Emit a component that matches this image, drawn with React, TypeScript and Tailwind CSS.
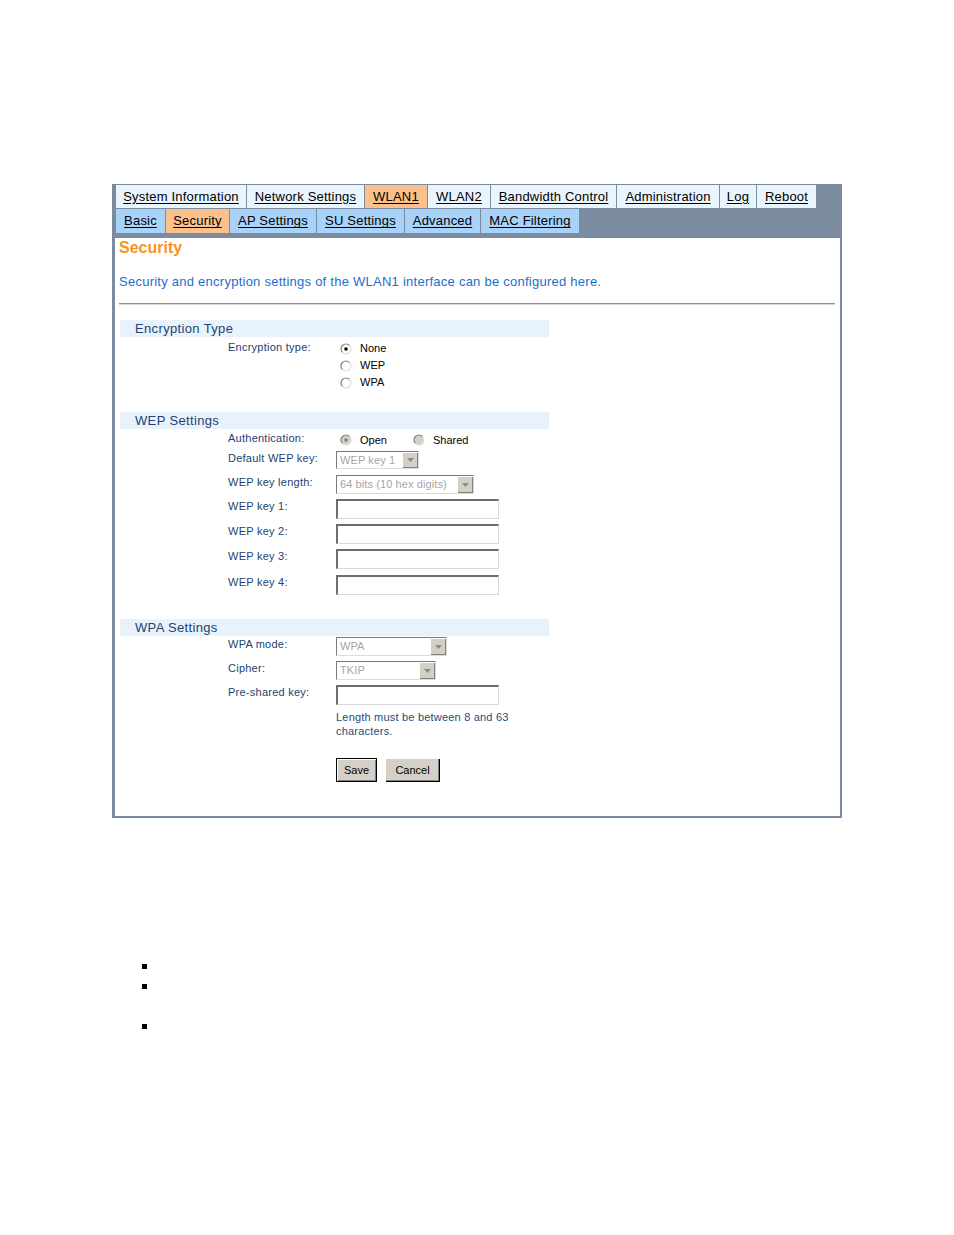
import React from "react"

// WLAN1 security page of the access point web UI

const topTabs = [
  { label: "System Information", w: "w-[130px]", active: false },
  { label: "Network Settings", w: "w-[117px]", active: false },
  { label: "WLAN1", w: "w-[62px]", active: true },
  { label: "WLAN2", w: "w-[62px]", active: false },
  { label: "Bandwidth Control", w: "w-[125px]", active: false },
  { label: "Administration", w: "w-[102px]", active: false },
  { label: "Log", w: "w-[36px]", active: false },
  { label: "Reboot", w: "w-[59px]", active: false },
]

const subTabs = [
  { label: "Basic", w: "w-[49px]", active: false },
  { label: "Security", w: "w-[63px]", active: true },
  { label: "AP Settings", w: "w-[86px]", active: false },
  { label: "SU Settings", w: "w-[87px]", active: false },
  { label: "Advanced", w: "w-[75px]", active: false },
  { label: "MAC Filtering", w: "w-[98px]", active: false },
]

function Radio({ checked = false, disabled = false }: { checked?: boolean; disabled?: boolean }) {
  return (
    <svg width="12" height="12" viewBox="0 0 12 12" className="shrink-0">
      <circle cx="6" cy="6" r="5" fill={disabled ? "#d4d0c8" : "#ffffff"} />
      <path d="M2.46 9.54 A5 5 0 0 1 9.54 2.46" fill="none" stroke="#808080" strokeWidth="1.2" />
      <path d="M9.54 2.46 A5 5 0 0 1 2.46 9.54" fill="none" stroke="#e2e0da" strokeWidth="1.2" />
      {checked && <circle cx="6" cy="6" r="1.8" fill={disabled ? "#808080" : "#000000"} />}
    </svg>
  )
}

function Select({ w, h, text }: { w: string; h: string; text: string }) {
  return (
    <div className={`${w} ${h} flex border-t border-l border-t-[#7a7a7a] border-l-[#7a7a7a] border-r border-b border-r-[#dcdcdc] border-b-[#dcdcdc] bg-white`}>
      <div className="flex-1 pl-[3px] text-[11px] leading-[17px] text-[#a6a6a6] tracking-[0.1px] whitespace-nowrap overflow-hidden">{text}</div>
      <div className="w-[16px] h-full flex items-center justify-center bg-[#d4d0c8] shadow-[inset_1px_1px_#ffffff,inset_-1px_-1px_#808080]">
        <svg width="7" height="4" viewBox="0 0 7 4">
          <path d="M0 0 L7 0 L3.5 4 Z" fill="#8a8a8a" />
        </svg>
      </div>
    </div>
  )
}

function TextInput() {
  return (
    <div className="w-[163px] h-[20px] bg-white border-t-2 border-l-2 border-t-[#6e6e6e] border-l-[#6e6e6e] border-r border-b border-r-[#d9d9d9] border-b-[#d9d9d9]" />
  )
}

function Label({ children, pt = "" }: { children: React.ReactNode; pt?: string }) {
  return (
    <div className={`w-[108px] shrink-0 text-[11px] leading-[14px] tracking-[0.25px] text-[#1d4272] ${pt}`}>
      {children}
    </div>
  )
}

function SectionBar({ title, mt }: { title: string; mt: string }) {
  return (
    <div className={`${mt} ml-px w-[429px] h-[17px] bg-[#e8f2fc] pl-[15px] text-[13px] leading-[17px] tracking-[0.35px] text-[#1e4370]`}>
      {title}
    </div>
  )
}

export default function App() {
  return (
    <div className="min-h-[1235px] bg-white font-['Liberation_Sans',Arial,sans-serif] pt-[184px]">
      <div className="ml-[112px] w-[730px] bg-[#7b8ca1] pt-px pl-[3px] pr-[2px] pb-[2px]">
        <div className="flex gap-px pl-px h-[23px]">
          {topTabs.map((t) => (
            <div
              key={t.label}
              className={`${t.w} flex items-center justify-center text-[13px] tracking-[0.2px] text-black underline underline-offset-2 whitespace-nowrap ${t.active ? "bg-[#fcc18a]" : "bg-[#eaf4fc]"}`}
            >
              {t.label}
            </div>
          ))}
        </div>
        <div className="flex gap-px pl-px mt-px h-[24px]">
          {subTabs.map((t) => (
            <div
              key={t.label}
              className={`${t.w} flex items-center justify-center text-[13px] tracking-[0.2px] text-black underline underline-offset-2 whitespace-nowrap ${t.active ? "bg-[#fcc18a]" : "bg-[#a8d2f8]"}`}
            >
              {t.label}
            </div>
          ))}
        </div>

        <div className="bg-white pl-[4px] pr-[5px] pb-[34px]">
          <h2 className="mt-[5px] h-[20px] leading-[20px] text-[16px] font-bold text-[#f7941d]">Security</h2>
          <p className="mt-[15px] leading-[17px] text-[13px] tracking-[0.25px] text-[#1e6dcc]">
            Security and encryption settings of the WLAN1 interface can be configured here.
          </p>
          <div className="mt-[13px] border-t border-b border-t-[#8f8f8f] border-b-[#d6d6d6]" />

          <SectionBar title="Encryption Type" mt="mt-[15px]" />
          <div className="ml-px pl-[108px] mt-[3px] flex">
            <Label>Encryption type:</Label>
            <div className="flex flex-col">
              {["None", "WEP", "WPA"].map((o, i) => (
                <div key={o} className="h-[17px] flex items-center gap-[8px] pl-[4px] text-[11px] text-black">
                  <Radio checked={i === 0} />
                  <span>{o}</span>
                </div>
              ))}
            </div>
          </div>

          <SectionBar title="WEP Settings" mt="mt-[21px]" />
          <div className="ml-px pl-[108px] mt-px flex h-[20px]">
            <Label pt="pt-px">Authentication:</Label>
            <div className="flex items-center text-[11px] text-black">
              <div className="w-[73px] flex items-center gap-[8px] pl-[4px]">
                <Radio checked disabled />
                <span>Open</span>
              </div>
              <div className="flex items-center gap-[8px] pl-[4px]">
                <Radio disabled />
                <span>Shared</span>
              </div>
            </div>
          </div>
          <div className="ml-px pl-[108px] mt-px flex">
            <Label>Default WEP key:</Label>
            <Select w="w-[83px]" h="h-[18px]" text="WEP key 1" />
          </div>
          <div className="ml-px pl-[108px] mt-[6px] flex">
            <Label>WEP key length:</Label>
            <Select w="w-[138px]" h="h-[19px]" text="64 bits (10 hex digits)" />
          </div>
          {["WEP key 1:", "WEP key 2:", "WEP key 3:", "WEP key 4:"].map((k, i) => (
            <div key={k} className={`ml-px pl-[108px] flex ${i === 3 ? "mt-[6px]" : "mt-[5px]"}`}>
              <Label>{k}</Label>
              <TextInput />
            </div>
          ))}

          <SectionBar title="WPA Settings" mt="mt-[24px]" />
          <div className="ml-px pl-[108px] mt-px flex">
            <Label>WPA mode:</Label>
            <Select w="w-[111px]" h="h-[19px]" text="WPA" />
          </div>
          <div className="ml-px pl-[108px] mt-[5px] flex">
            <Label>Cipher:</Label>
            <Select w="w-[100px]" h="h-[19px]" text="TKIP" />
          </div>
          <div className="ml-px pl-[108px] mt-[5px] flex">
            <Label>Pre-shared key:</Label>
            <TextInput />
          </div>
          <div className="ml-[217px] mt-[5px] text-[11px] leading-[14px] tracking-[0.2px] text-[#1d4c7c]">
            <div>Length must be between 8 and 63</div>
            <div>characters.</div>
          </div>
          <div className="ml-[217px] mt-[20px] flex gap-[8px]">
            <button className="w-[41px] h-[24px] border border-black bg-[#d4d0c8] text-[11px] text-black shadow-[inset_1px_1px_#ffffff,inset_-1px_-1px_#808080]">
              Save
            </button>
            <button className="w-[55px] h-[24px] bg-[#d4d0c8] text-[11px] text-black shadow-[inset_1px_1px_#ffffff,inset_-1px_-1px_#000000,inset_-2px_-2px_#808080]">
              Cancel
            </button>
          </div>
        </div>
      </div>

      <div className="ml-[142px] mt-[146px]">
        <div className="w-[5px] h-[5px] bg-black" />
        <div className="w-[5px] h-[5px] bg-black mt-[15px]" />
        <div className="w-[5px] h-[5px] bg-black mt-[35px]" />
      </div>
    </div>
  )
}
